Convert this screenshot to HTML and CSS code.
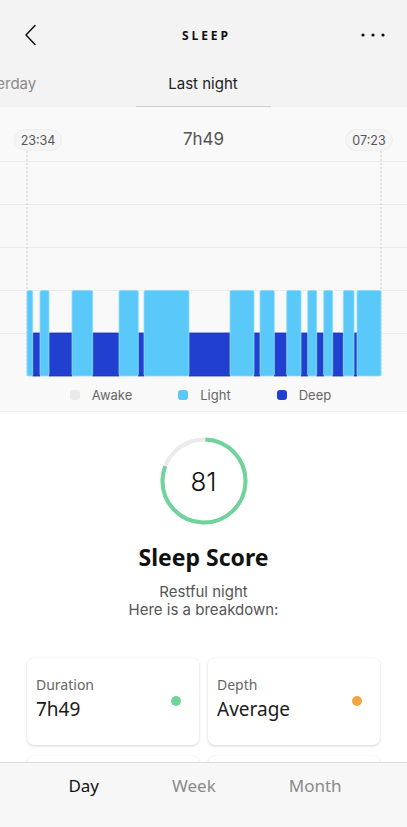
FILE: index.html
```html
<!DOCTYPE html>
<html>
<head>
<meta charset="utf-8">
<link rel="stylesheet" href="styles.css">
</head>
<body>
<div class="app">
  <header class="topbar">
    <svg class="back" width="20" height="22" viewBox="0 0 20 22"><path d="M14 1.5 L5 11 L14 20.5" fill="none" stroke="#111" stroke-width="1.5" stroke-linecap="round" stroke-linejoin="round"/></svg>
    <div class="title">SLEEP</div>
    <svg class="more" width="26" height="6" viewBox="0 0 26 6"><circle cx="3" cy="3" r="1.6" fill="#111"/><circle cx="13" cy="3" r="1.6" fill="#111"/><circle cx="23" cy="3" r="1.6" fill="#111"/></svg>
  </header>
  <nav class="tabs">
    <div class="tab">Yesterday</div>
    <div class="tab active"><span>Last night</span></div>
    <div class="tab"></div>
  </nav>
  <section class="chart">
    <div class="chart-head">
      <span class="pill">23:34</span>
      <span class="total">7h49</span>
      <span class="pill">07:23</span>
    </div>
    <svg class="plot" width="407" height="226" viewBox="0 0 407 226">
      <g stroke="#ebebeb" stroke-width="1">
        <line x1="0" y1="10.5" x2="407" y2="10.5"/>
        <line x1="0" y1="53.5" x2="407" y2="53.5"/>
        <line x1="0" y1="96.5" x2="407" y2="96.5"/>
        <line x1="0" y1="139.5" x2="407" y2="139.5"/>
        <line x1="0" y1="182.5" x2="407" y2="182.5"/>
      </g>
      <g stroke="#c9c9c9" stroke-width="1" stroke-dasharray="2 2">
        <line x1="27" y1="0" x2="27" y2="225"/>
        <line x1="381" y1="0" x2="381" y2="225"/>
      </g>
      <g fill="#2140d0" stroke="#1a2fb0" stroke-width="0.8">
        <rect x="32.7" y="182" width="7.3" height="43"/>
        <rect x="49" y="182" width="23" height="43"/>
        <rect x="92.7" y="182" width="26.3" height="43"/>
        <rect x="138.3" y="182" width="5.7" height="43"/>
        <rect x="189" y="182" width="41" height="43"/>
        <rect x="254" y="182" width="6" height="43"/>
        <rect x="274.3" y="182" width="12.4" height="43"/>
        <rect x="301" y="182" width="6.7" height="43"/>
        <rect x="316.7" y="182" width="7" height="43"/>
        <rect x="332.7" y="182" width="10.6" height="43"/>
        <rect x="354" y="182" width="3" height="43"/>
      </g>
      <g fill="#5ac8f9" stroke="#8fdcfb" stroke-width="0.8">
        <rect x="27" y="139.4" width="5.7" height="85.6" rx="1.5"/>
        <rect x="40" y="139.4" width="9" height="85.6" rx="1.5"/>
        <rect x="72" y="139.4" width="20.7" height="85.6" rx="1.5"/>
        <rect x="119" y="139.4" width="19.3" height="85.6" rx="1.5"/>
        <rect x="144" y="139.4" width="45" height="85.6" rx="1.5"/>
        <rect x="230" y="139.4" width="24" height="85.6" rx="1.5"/>
        <rect x="260" y="139.4" width="14.3" height="85.6" rx="1.5"/>
        <rect x="286.7" y="139.4" width="14.3" height="85.6" rx="1.5"/>
        <rect x="307.7" y="139.4" width="9" height="85.6" rx="1.5"/>
        <rect x="323.7" y="139.4" width="9" height="85.6" rx="1.5"/>
        <rect x="343.3" y="139.4" width="10.7" height="85.6" rx="1.5"/>
        <rect x="357" y="139.4" width="24" height="85.6" rx="1.5"/>
      </g>
    </svg>
    <div class="legend">
      <div class="leg"><span class="sw awake"></span>Awake</div>
      <div class="leg"><span class="sw light"></span>Light</div>
      <div class="leg"><span class="sw deep"></span>Deep</div>
    </div>
  </section>
  <main class="summary">
    <div class="ring">
      <svg width="88" height="88" viewBox="0 0 88 88">
        <circle cx="44" cy="44" r="41.5" fill="none" stroke="#ebebeb" stroke-width="4"/>
        <circle cx="44" cy="44" r="41.5" fill="none" stroke="#6fd39b" stroke-width="4" stroke-dasharray="209 400" transform="rotate(-88 44 44)"/>
      </svg>
      <span class="score">81</span>
    </div>
    <h1 class="score-title">Sleep Score</h1>
    <p class="subtitle">Restful night<br>Here is a breakdown:</p>
    <div class="cards">
      <div class="card">
        <div class="card-text"><div class="label">Duration</div><div class="value">7h49</div></div>
        <span class="dot green"></span>
      </div>
      <div class="card">
        <div class="card-text"><div class="label">Depth</div><div class="value">Average</div></div>
        <span class="dot orange"></span>
      </div>
      <div class="card"></div>
      <div class="card"></div>
    </div>
  </main>
  <footer class="bottom-nav">
    <span class="nav-item active">Day</span>
    <span class="nav-item">Week</span>
    <span class="nav-item">Month</span>
  </footer>
</div>
</body>
</html>
```

FILE: styles.css
```css
* { box-sizing: border-box; }
html, body { margin: 0; padding: 0; }
body {
  width: 407px;
  height: 827px;
  overflow: hidden;
  background: #fff;
  font-family: Inter, "Noto Sans", sans-serif;
  color: #222;
}
.app {
  position: relative;
  width: 407px;
  height: 827px;
  overflow: hidden;
  display: flex;
  flex-direction: column;
}
.app > * { flex-shrink: 0; }
.topbar {
  height: 70px;
  background: #f3f3f3;
  display: flex;
  align-items: center;
  justify-content: space-between;
  padding: 0 21px 0 21px;
}
.back { display: block; }
.title {
  font-family: "Open Sans", sans-serif;
  font-weight: 700;
  font-size: 12px;
  letter-spacing: 2.9px;
  color: #111;
  margin-left: 12px;
}
.more { display: block; }
.tabs {
  height: 37px;
  background: #f3f3f3;
  display: grid;
  grid-template-columns: 202px 202px 202px;
  margin-left: -100px;
  width: 606px;
}
.tab {
  display: flex;
  justify-content: center;
  align-items: flex-start;
  padding-top: 4px;
  font-size: 15px;
  color: #8a8a8a;
  line-height: 20px;
}
.tab.active { color: #222; }
.tab.active span {
  display: block;
  width: 135px;
  height: 33px;
  text-align: center;
  border-bottom: 1.5px solid #cfcfcf;
}
.chart {
  background: #f9f9f9;
  padding-top: 22px;
  height: 305px;
  border-bottom: 1px solid #efefef;
}
.chart-head {
  display: flex;
  justify-content: space-between;
  align-items: center;
  padding: 0 14px;
  height: 22px;
}
.pill {
  font-size: 12.5px;
  color: #555;
  background: #f5f5f5;
  border: 1px solid #eeeeee;
  border-radius: 11px;
  height: 22px;
  width: 48px;
  display: flex;
  align-items: center;
  justify-content: center;
}
.total {
  font-size: 17px;
  color: #555;
  margin-top: -2px;
}
.plot { display: block; }
.legend {
  display: flex;
  justify-content: center;
  gap: 46px;
  height: 34px;
  align-items: center;
  padding-top: 2px;
  margin-left: -6px;
}
.leg {
  display: flex;
  align-items: center;
  gap: 12px;
  font-size: 13px;
  color: #666;
}
.sw {
  width: 10px;
  height: 10px;
  border-radius: 3px;
  display: inline-block;
}
.sw.awake { background: #e9e9e9; }
.sw.light { background: #5ac8f9; }
.sw.deep { background: #2140d0; }
.summary {
  display: flex;
  flex-direction: column;
  align-items: center;
  padding-top: 25px;
}
.ring {
  position: relative;
  width: 88px;
  height: 88px;
  display: flex;
  align-items: center;
  justify-content: center;
}
.ring svg { position: absolute; left: 0; top: 0; }
.score {
  font-size: 26px;
  font-weight: 300;
  color: #111;
}
.score-title {
  margin: 17px 0 0 0;
  font-family: "Noto Sans", sans-serif;
  font-weight: 700;
  font-size: 23px;
  line-height: 30px;
  color: #111;
}
.subtitle {
  margin: 11px 0 0 0;
  font-size: 15px;
  line-height: 18px;
  color: #555;
  text-align: center;
}
.cards {
  margin-top: 39px;
  width: 100%;
  padding: 0 27px;
  display: grid;
  grid-template-columns: 1fr 1fr;
  column-gap: 9px;
  row-gap: 11px;
}
.card {
  height: 87px;
  background: #fff;
  border-radius: 7px;
  box-shadow: 0 1px 3px rgba(0,0,0,0.16), 0 0 1px rgba(0,0,0,0.06);
  display: flex;
  justify-content: space-between;
  padding: 16px 18px 0 9px;
  font-family: "Noto Sans", sans-serif;
}
.label {
  font-size: 14px;
  line-height: 21px;
  color: #666;
}
.value {
  font-size: 19px;
  line-height: 26px;
  color: #1a1a1a;
  margin-top: 1px;
}
.dot {
  width: 10px;
  height: 10px;
  border-radius: 50%;
  margin-top: 22px;
}
.dot.green { background: #6fd39b; }
.dot.orange { background: #f2a541; }
.bottom-nav {
  position: absolute;
  left: 0;
  right: 0;
  bottom: 0;
  height: 65px;
  background: #f7f7f7;
  border-top: 1px solid #dcdcdc;
  display: flex;
  justify-content: center;
  gap: 73px;
  padding-top: 11px;
  padding-left: 3px;
  font-family: "Noto Sans", sans-serif;
  font-size: 17px;
  line-height: 24px;
}
.nav-item { color: #8a8a8a; }
.nav-item.active { color: #111; }
```
